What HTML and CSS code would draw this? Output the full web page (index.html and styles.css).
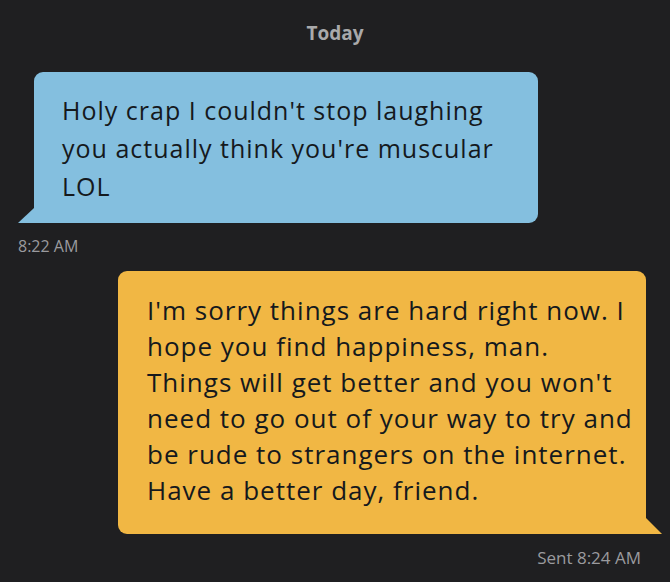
FILE: index.html
```html
<!DOCTYPE html>
<html lang="en">
<head>
    <meta charset="UTF-8">
    <title>Chat</title>
    <link rel="stylesheet" href="styles.css">
</head>
<body>
<div class="chat">
    <div class="day">Today</div>

    <div class="msg in">
        <div class="bubble">Holy crap I couldn't stop laughing<br>you actually think you're muscular<br>LOL</div>
        <div class="time">8:22 AM</div>
    </div>

    <div class="msg out">
        <div class="bubble">I'm sorry things are hard right now. I<br>hope you find happiness, man.<br>Things will get better and you won't<br>need to go out of your way to try and<br>be rude to strangers on the internet.<br>Have a better day, friend.</div>
        <div class="time">Sent 8:24 AM</div>
    </div>
</div>
</body>
</html>
```

FILE: styles.css
```css
body {
    margin: 0;
    background: #1f1f21;
    font-family: "Open Sans", Roboto, sans-serif;
}
.chat {
    width: 670px;
    height: 582px;
    overflow: hidden;
}
.day {
    text-align: center;
    color: #a9a9ab;
    font-weight: bold;
    font-size: 19px;
    line-height: 22px;
    padding-top: 22px;
    height: 50px;
}
.msg {
    display: flex;
    flex-direction: column;
}
.bubble {
    position: relative;
    color: #15191d;
    border-radius: 9px;
    white-space: nowrap;
    font-weight: 500;
    letter-spacing: 1px;
}
.bubble::before {
    content: "";
    position: absolute;
    bottom: 0;
    width: 0;
    height: 0;
}
.in .bubble {
    background: #84bfdf;
    margin-left: 34px;
    width: 504px;
    box-sizing: border-box;
    padding: 19px 20px 18px 28px;
    font-size: 25px;
    line-height: 38px;
    border-bottom-left-radius: 0;
}
.in .bubble::before {
    left: -16px;
    border-bottom: 15px solid #84bfdf;
    border-left: 16px solid transparent;
}
.in .time {
    color: #9a9a9e;
    font-size: 16px;
    padding: 12px 0 0 18px;
    height: 36px;
}
.out .bubble {
    background: #f1b744;
    margin-left: 118px;
    width: 528px;
    box-sizing: border-box;
    padding: 21px 16px 26px 29px;
    font-size: 26px;
    line-height: 36px;
    border-bottom-right-radius: 0;
}
.out .bubble::before {
    right: -16px;
    border-bottom: 16px solid #f1b744;
    border-right: 16px solid transparent;
}
.out .time {
    color: #9a9a9e;
    font-size: 17px;
    text-align: right;
    padding: 12px 29px 0 0;
}
```
